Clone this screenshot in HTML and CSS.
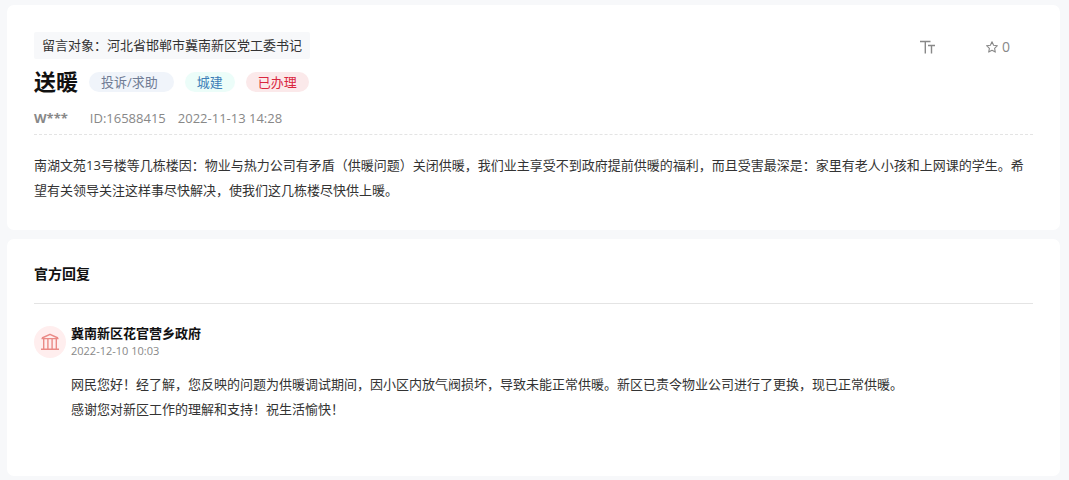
FILE: index.html
```html
<!DOCTYPE html>
<html lang="zh-CN">
<head>
    <meta charset="UTF-8">
    <meta name="viewport" content="width=device-width, initial-scale=1.0">
    <title>送暖</title>
    <link rel="stylesheet" href="styles.css">
</head>
<body>
    <main class="page">
        <article class="card">
            <div class="top">
                <p class="target">留言对象：河北省邯郸市冀南新区党工委书记</p>
                <div class="actions">
                    <button type="button" class="action" aria-label="字号">
                        <svg width="16" height="14" viewBox="0 0 16 14" fill="none" stroke="currentColor" stroke-width="1.4">
                            <path d="M0 1.5h10.5M5.3 1.5V13.5"/>
                            <path d="M8 5.5h7M11.5 5.5V13.5"/>
                        </svg>
                    </button>
                    <button type="button" class="action">
                        <svg width="12" height="12" viewBox="0 0 12 12" fill="none" stroke="currentColor" stroke-width="1.1" stroke-linejoin="round">
                            <path d="M6 .8l1.6 3.4 3.8.5-2.8 2.6.7 3.8L6 9.3l-3.3 1.8.7-3.8L.6 4.7l3.8-.5z"/>
                        </svg>
                        <span>0</span>
                    </button>
                </div>
            </div>

            <div class="title-row">
                <h1>送暖</h1>
                <span class="tag tag-type">投诉/求助</span>
                <span class="tag tag-field">城建</span>
                <span class="tag tag-state">已办理</span>
            </div>

            <div class="meta">
                <strong class="author">W***</strong>
                <span>ID:16588415</span>
                <time datetime="2022-11-13T14:28">2022-11-13 14:28</time>
            </div>

            <p class="content">南湖文苑13号楼等几栋楼因：物业与热力公司有矛盾（供暖问题）关闭供暖，我们业主享受不到政府提前供暖的福利，而且受害最深是：家里有老人小孩和上网课的学生。希望有关领导关注这样事尽快解决，使我们这几栋楼尽快供上暖。</p>
        </article>

        <section class="card replies">
            <h2>官方回复</h2>
            <div class="reply">
                <div class="avatar">
                    <svg width="20" height="18" viewBox="0 0 20 18" fill="none" stroke="currentColor" stroke-width="1.4" stroke-linejoin="round">
                        <path d="M2 5L10 1.3 18 5"/>
                        <path d="M1.5 5.6h17M1 16.3h18"/>
                        <path d="M3.7 6v10M7.9 6v10M12.1 6v10M16.3 6v10"/>
                    </svg>
                </div>
                <div class="reply-body">
                    <h3>冀南新区花官营乡政府</h3>
                    <time class="reply-time" datetime="2022-12-10T10:03">2022-12-10 10:03</time>
                    <p class="reply-text">网民您好！经了解，您反映的问题为供暖调试期间，因小区内放气阀损坏，导致未能正常供暖。新区已责令物业公司进行了更换，现已正常供暖。<br>感谢您对新区工作的理解和支持！祝生活愉快！</p>
                </div>
            </div>
        </section>
    </main>
</body>
</html>
```

FILE: styles.css
```css
* {
    margin: 0;
    padding: 0;
    box-sizing: border-box;
}

body {
    font-family: "Open Sans", "Noto Sans CJK SC", sans-serif;
    font-size: 13px;
    line-height: 25px;
    color: #333;
    background-color: #f7f8fa;
}

.page {
    display: flex;
    flex-direction: column;
    gap: 9px;
    padding: 5px 9px 4px 7px;
}

.card {
    padding: 27px;
    background-color: #fff;
    border-radius: 7px;
}

/* 留言 */
.top {
    display: flex;
    justify-content: space-between;
    align-items: center;
}

.target {
    padding: 1px 8px;
    background-color: #f7f8fa;
    border-radius: 2px;
}

.actions {
    display: flex;
    align-items: center;
    gap: 50px;
    padding: 2px 23px 0 0;
}

.action {
    display: flex;
    align-items: center;
    gap: 4px;
    font: inherit;
    font-size: 14px;
    color: #888;
    background: none;
    border: none;
    cursor: pointer;
}

.title-row {
    display: flex;
    align-items: center;
    padding: 10px 0;
}

h1 {
    margin-right: 11px;
    font-size: 22px;
    color: #111;
}

.tag {
    margin-right: 11px;
    padding: 0 12px;
    line-height: 20px;
    border-radius: 10px;
}

.tag-type {
    padding-right: 16px;
    color: #6f7b94;
    background-color: #f0f4fa;
}

.tag-field {
    color: #3d7fb8;
    background-color: #ecfdf9;
}

.tag-state {
    color: #d9263f;
    background-color: #fbe9ea;
}

.meta {
    display: flex;
    gap: 12px;
    padding-top: 2px;
    padding-bottom: 3px;
    color: #888;
    border-bottom: 1px dashed #e4e4e4;
}

.author {
    margin-right: 10px;
}

.content {
    padding-top: 18px;
}

/* 官方回复 */
.replies {
    padding-top: 22px;
    padding-bottom: 54px;
}

h2 {
    padding-bottom: 17px;
    font-size: 14px;
    color: #111;
    border-bottom: 1px solid #e4e4e4;
}

.reply {
    display: flex;
    gap: 5px;
    padding-top: 22px;
}

.avatar {
    display: flex;
    justify-content: center;
    align-items: center;
    flex-shrink: 0;
    width: 32px;
    height: 32px;
    color: #ea8a86;
    background-color: #ffeeee;
    border-radius: 50%;
}

h3 {
    font-size: 13px;
    line-height: 15px;
    color: #111;
}

.reply-time {
    display: block;
    font-size: 11px;
    line-height: 19px;
    color: #888;
}

.reply-text {
    padding-top: 12px;
}
```
